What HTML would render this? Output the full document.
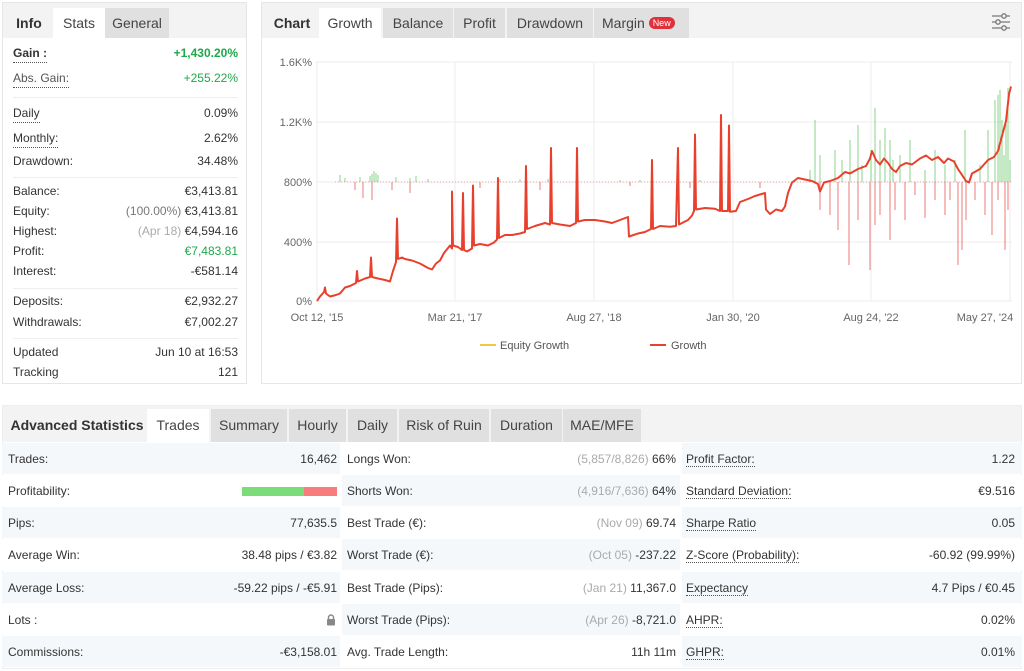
<!DOCTYPE html>
<html><head><meta charset="utf-8"><style>
*{box-sizing:border-box;margin:0;padding:0}
body{width:1024px;height:671px;background:#fff;font-family:"Liberation Sans",sans-serif;font-size:12px;color:#333;position:relative;overflow:hidden}
.abs{position:absolute}
.panel{position:absolute;border:1px solid #e6e6e6;background:#fff}
.tabbar{position:absolute;left:0;right:0;top:0;height:35px;background:#f3f3f3}
.tab{position:absolute;top:5px;height:30px;line-height:30px;text-align:center;font-size:14px;color:#444;background:#e0e0e0}
.tab.on{background:#fff}
.tab.plain{background:transparent;color:#333}
.row{position:absolute;left:10px;right:8px;height:18px;line-height:18px}
.row .l{position:absolute;left:0}
.row .r{position:absolute;right:0}
.dot{border-bottom:1px dotted #555}
.g{color:#1ea84a}
.gr{color:#aaa}
.hr{position:absolute;left:10px;right:8px;height:1px;background:#eee}
.br{position:absolute;height:32px;line-height:32px;font-size:12px}
.cell{position:absolute;height:31px}
</style></head><body>

<div class="panel" style="left:2px;top:2px;width:245px;height:382px">
 <div class="tabbar"></div>
 <div class="tab plain" style="left:2px;width:48px;font-weight:bold;font-size:14px">Info</div>
 <div class="tab on" style="left:50px;width:52px">Stats</div>
 <div class="tab" style="left:102px;width:64px">General</div>
 <div class="row" style="top:41px"><span class="l dot" style="font-weight:bold">Gain :</span><span class="r g" style="font-weight:bold">+1,430.20%</span></div>
 <div class="row" style="top:66px"><span class="l dot" style="color:#555">Abs. Gain:</span><span class="r g">+255.22%</span></div>
 <div class="hr" style="top:94px"></div>
 <div class="row" style="top:101px"><span class="l dot">Daily</span><span class="r">0.09%</span></div>
 <div class="row" style="top:126px"><span class="l dot">Monthly:</span><span class="r">2.62%</span></div>
 <div class="row" style="top:149px"><span class="l">Drawdown:</span><span class="r">34.48%</span></div>
 <div class="hr" style="top:174px"></div>
 <div class="row" style="top:179px"><span class="l">Balance:</span><span class="r">€3,413.81</span></div>
 <div class="row" style="top:199px"><span class="l">Equity:</span><span class="r"><span style="color:#777">(100.00%)</span> €3,413.81</span></div>
 <div class="row" style="top:219px"><span class="l">Highest:</span><span class="r"><span class="gr">(Apr 18)</span> €4,594.16</span></div>
 <div class="row" style="top:239px"><span class="l">Profit:</span><span class="r g">€7,483.81</span></div>
 <div class="row" style="top:259px"><span class="l">Interest:</span><span class="r">-€581.14</span></div>
 <div class="hr" style="top:285px"></div>
 <div class="row" style="top:289px"><span class="l">Deposits:</span><span class="r">€2,932.27</span></div>
 <div class="row" style="top:310px"><span class="l">Withdrawals:</span><span class="r">€7,002.27</span></div>
 <div class="hr" style="top:335px"></div>
 <div class="row" style="top:340px"><span class="l">Updated</span><span class="r">Jun 10 at 16:53</span></div>
 <div class="row" style="top:360px"><span class="l">Tracking</span><span class="r">121</span></div>
</div>

<div class="panel" style="left:261px;top:2px;width:761px;height:382px">
 <div class="tabbar"></div>
 <div class="tab plain" style="left:4px;width:52px;font-weight:bold">Chart</div>
 <div class="tab on" style="left:57px;width:62px">Growth</div>
 <div class="tab" style="left:121px;width:70px">Balance</div>
 <div class="tab" style="left:192px;width:51px">Profit</div>
 <div class="tab" style="left:245px;width:86px">Drawdown</div>
 <div class="tab" style="left:332px;width:95px;text-align:left;padding-left:8px">Margin <span style="display:inline-block;background:#e0303c;color:#fff;font-size:9px;line-height:12px;height:12px;padding:0 4px;border-radius:6px;vertical-align:2px">New</span></div>
 <svg class="abs" style="left:728px;top:8px" width="22" height="22" viewBox="0 0 22 22" fill="none" stroke="#777" stroke-width="1.3">
  <path d="M2 5h18M2 11h18M2 17h18"/><circle cx="14" cy="5" r="2.2" fill="#f3f3f3"/><circle cx="8" cy="11" r="2.2" fill="#f3f3f3"/><circle cx="14" cy="17" r="2.2" fill="#f3f3f3"/>
 </svg>
</div>

<svg class="abs" style="left:0;top:0" width="1024" height="400" font-family="Liberation Sans, sans-serif" font-size="11" fill="#666">
 <g stroke="#ececec" stroke-width="1">
  <path d="M316 62H1012M316 122H1012M316 182H1012M316 242H1012M316 301H1012"/>
  <path d="M317 62V301M455 62V301M594 62V301M733 62V301M871 62V301M1010 62V301"/>
 </g>
 <g text-anchor="end">
  <text x="312" y="66">1.6K%</text><text x="312" y="126">1.2K%</text><text x="312" y="186">800%</text><text x="312" y="246">400%</text><text x="312" y="305">0%</text>
 </g>
 <g text-anchor="middle">
  <text x="317" y="321">Oct 12, '15</text><text x="455" y="321">Mar 21, '17</text><text x="594" y="321">Aug 27, '18</text><text x="733" y="321">Jan 30, '20</text><text x="871" y="321">Aug 24, '22</text><text x="985" y="321">May 27, '24</text>
 </g>
 <path d="M335 182H1012" stroke="#e8a0a0" stroke-width="1" stroke-dasharray="1 2"/>
 <g stroke="#6cc96c" stroke-width="0.8">
  <path d="M340 182V175M345 182V178M360 182V177M370 182V176M372 182V174M374 182V171M376 182V173M378 182V175M396 182V177M410 182V178M416 182V176M428 182V179M500 182V179M520 182V179M548 182V179M620 182V180M640 182V180M700 182V180M810 182V170M815 182V120M820 182V155M835 182V150M842 182V160M850 182V140M858 182V125M862 182V165M871 182V150M875 182V108M880 182V140M885 182V128M890 182V140M893 182V160M900 182V155M910 182V140M925 182V170M935 182V150M945 182V165M955 182V160M965 182V130M980 182V165M988 182V130M995 182V100M998 182V95M1000 182V90M1002 182V120M1004 182V155M1006 182V115M1008 182V88M1010 182V160"/>
 </g>
 <g stroke="#e85a5a" stroke-width="0.8">
  <path d="M355 182V190M363 182V198M372 182V200M392 182V190M410 182V193M480 182V188M540 182V190M630 182V186M690 182V188M760 182V188M820 182V210M830 182V215M838 182V230M849 182V265M858 182V220M870 182V270M875 182V225M880 182V215M890 182V240M895 182V210M905 182V220M915 182V195M925 182V218M935 182V200M945 182V215M950 182V200M958 182V265M962 182V250M966 182V220M975 182V200M985 182V215M992 182V235M998 182V200M1005 182V250M1008 182V210"/>
 </g>
 <g transform="translate(0,301) scale(1,-0.15)">
  <polyline fill="none" stroke="#e8402c" stroke-width="2" vector-effect="non-scaling-stroke" stroke-linejoin="round" points="317,0 320,30 324,60 325,90 326,50 330,30 336,40 340,50 345,90 350,100 356,120 357,200 358,130 365,150 370,160 371,290 372,160 378,150 385,140 390,130 393,200 396,260 397,550 398,280 402,290 405,280 412,270 420,250 428,220 432,210 436,250 440,270 444,320 450,370 452,350 452,730 453,370 458,360 462,340 463,720 464,340 467,330 472,350 473,770 474,370 480,380 488,370 494,390 497,410 498,820 499,420 505,440 512,440 520,450 525,460 526,900 527,480 535,500 545,520 550,510 551,1020 552,520 560,510 570,500 576,520 577,1020 578,530 585,540 595,540 605,530 612,520 620,540 626,555 628,560 629,430 638,450 645,460 651,480 652,940 653,480 660,500 670,495 676,500 678,1020 679,510 688,540 692,570 694,600 695,1110 696,610 705,620 715,615 720,600 721,1240 722,600 728,600 729,1170 730,595 736,600 740,660 748,680 755,700 765,720 766,610 770,580 776,610 782,600 785,630 788,720 792,790 798,820 805,810 812,800 818,780 820,730 824,790 830,800 838,820 845,860 850,850 858,880 866,900 870,950 872,1000 876,940 880,910 884,950 888,920 892,880 896,860 900,900 906,920 912,910 920,950 926,970 932,940 938,960 944,920 948,950 954,930 958,880 962,840 966,800 969,790 972,850 980,880 988,940 994,960 998,1000 1002,1100 1006,1200 1009,1380 1011,1430"/>
 </g>
 <line x1="480" y1="345" x2="496" y2="345" stroke="#f4c542" stroke-width="2"/>
 <text x="500" y="349" fill="#555">Equity Growth</text>
 <line x1="650" y1="345" x2="666" y2="345" stroke="#e8402c" stroke-width="2"/>
 <text x="671" y="349" fill="#555">Growth</text>
</svg>

<div class="panel" style="left:2px;top:405px;width:1020px;height:264px;border-color:#eee">
 <div class="tabbar" style="height:36px"></div>
 <div class="tab plain" style="left:4px;width:140px;font-weight:bold;color:#333;top:3px;height:33px;line-height:33px">Advanced Statistics</div>
 <div class="tab on" style="left:144px;width:62px;top:3px;height:33px;line-height:33px">Trades</div>
 <div class="tab" style="left:208px;width:76px;top:3px;height:33px;line-height:33px">Summary</div>
 <div class="tab" style="left:286px;width:57px;top:3px;height:33px;line-height:33px">Hourly</div>
 <div class="tab" style="left:345px;width:49px;top:3px;height:33px;line-height:33px">Daily</div>
 <div class="tab" style="left:396px;width:90px;top:3px;height:33px;line-height:33px">Risk of Ruin</div>
 <div class="tab" style="left:488px;width:71px;top:3px;height:33px;line-height:33px">Duration</div>
 <div class="tab" style="left:560px;width:78px;top:3px;height:33px;line-height:33px">MAE/MFE</div>
</div>

<div class="abs" style="left:2px;top:443px;width:1020px;height:226px">
 <div class="cell" style="left:0;top:0;width:338px;background:#f5f8fa"></div>
 <div class="cell" style="left:340px;top:0;width:338px;background:#fff"></div>
 <div class="cell" style="left:680px;top:0;width:340px;background:#f5f8fa"></div>
 <div class="cell" style="left:0;top:32px;width:338px;background:#fff"></div>
 <div class="cell" style="left:340px;top:32px;width:338px;background:#f5f8fa"></div>
 <div class="cell" style="left:680px;top:32px;width:340px;background:#fff"></div>
 <div class="cell" style="left:0;top:64px;width:338px;background:#f5f8fa"></div>
 <div class="cell" style="left:340px;top:64px;width:338px;background:#fff"></div>
 <div class="cell" style="left:680px;top:64px;width:340px;background:#f5f8fa"></div>
 <div class="cell" style="left:0;top:96px;width:338px;background:#fff"></div>
 <div class="cell" style="left:340px;top:96px;width:338px;background:#f5f8fa"></div>
 <div class="cell" style="left:680px;top:96px;width:340px;background:#fff"></div>
 <div class="cell" style="left:0;top:129px;width:338px;background:#f5f8fa"></div>
 <div class="cell" style="left:340px;top:129px;width:338px;background:#fff"></div>
 <div class="cell" style="left:680px;top:129px;width:340px;background:#f5f8fa"></div>
 <div class="cell" style="left:0;top:161px;width:338px;background:#fff"></div>
 <div class="cell" style="left:340px;top:161px;width:338px;background:#f5f8fa"></div>
 <div class="cell" style="left:680px;top:161px;width:340px;background:#fff"></div>
 <div class="cell" style="left:0;top:193px;width:338px;background:#f5f8fa"></div>
 <div class="cell" style="left:340px;top:193px;width:338px;background:#fff"></div>
 <div class="cell" style="left:680px;top:193px;width:340px;background:#f5f8fa"></div>
</div>

<div class="abs" style="left:0;top:443px;width:1024px">
 <div class="br" style="left:8px;top:0">Trades:</div><div class="br" style="right:687px;top:0">16,462</div>
 <div class="br" style="left:8px;top:32px">Profitability:</div>
 <div class="abs" style="left:242px;top:44px;width:62px;height:9px;background:#7ddc7a"></div><div class="abs" style="left:304px;top:44px;width:33px;height:9px;background:#f77c7c"></div>
 <div class="br" style="left:8px;top:64px">Pips:</div><div class="br" style="right:687px;top:64px">77,635.5</div>
 <div class="br" style="left:8px;top:96px">Average Win:</div><div class="br" style="right:687px;top:96px">38.48 pips / €3.82</div>
 <div class="br" style="left:8px;top:129px">Average Loss:</div><div class="br" style="right:687px;top:129px">-59.22 pips / -€5.91</div>
 <div class="br" style="left:8px;top:161px">Lots :</div>
 <svg class="abs" style="left:326px;top:171px" width="10" height="12" viewBox="0 0 10 12"><path d="M2.5 5V3.5a2.5 2.5 0 0 1 5 0V5" fill="none" stroke="#888" stroke-width="1.4"/><rect x="1" y="5" width="8" height="6.5" rx="1" fill="#888"/></svg>
 <div class="br" style="left:8px;top:193px">Commissions:</div><div class="br" style="right:687px;top:193px">-€3,158.01</div>

 <div class="br" style="left:347px;top:0">Longs Won:</div><div class="br" style="right:348px;top:0"><span class="gr">(5,857/8,826)</span> 66%</div>
 <div class="br" style="left:347px;top:32px">Shorts Won:</div><div class="br" style="right:348px;top:32px"><span class="gr">(4,916/7,636)</span> 64%</div>
 <div class="br" style="left:347px;top:64px">Best Trade (€):</div><div class="br" style="right:348px;top:64px"><span class="gr">(Nov 09)</span> 69.74</div>
 <div class="br" style="left:347px;top:96px">Worst Trade (€):</div><div class="br" style="right:348px;top:96px"><span class="gr">(Oct 05)</span> -237.22</div>
 <div class="br" style="left:347px;top:129px">Best Trade (Pips):</div><div class="br" style="right:348px;top:129px"><span class="gr">(Jan 21)</span> 11,367.0</div>
 <div class="br" style="left:347px;top:161px">Worst Trade (Pips):</div><div class="br" style="right:348px;top:161px"><span class="gr">(Apr 26)</span> -8,721.0</div>
 <div class="br" style="left:347px;top:193px">Avg. Trade Length:</div><div class="br" style="right:348px;top:193px">11h 11m</div>

 <div class="br" style="left:686px;top:0"><span class="dot">Profit Factor:</span></div><div class="br" style="right:9px;top:0">1.22</div>
 <div class="br" style="left:686px;top:32px"><span class="dot">Standard Deviation:</span></div><div class="br" style="right:9px;top:32px">€9.516</div>
 <div class="br" style="left:686px;top:64px"><span class="dot">Sharpe Ratio</span></div><div class="br" style="right:9px;top:64px">0.05</div>
 <div class="br" style="left:686px;top:96px"><span class="dot">Z-Score (Probability):</span></div><div class="br" style="right:9px;top:96px">-60.92 (99.99%)</div>
 <div class="br" style="left:686px;top:129px"><span class="dot">Expectancy</span></div><div class="br" style="right:9px;top:129px">4.7 Pips / €0.45</div>
 <div class="br" style="left:686px;top:161px"><span class="dot">AHPR:</span></div><div class="br" style="right:9px;top:161px">0.02%</div>
 <div class="br" style="left:686px;top:193px"><span class="dot">GHPR:</span></div><div class="br" style="right:9px;top:193px">0.01%</div>
</div>
</body></html>
